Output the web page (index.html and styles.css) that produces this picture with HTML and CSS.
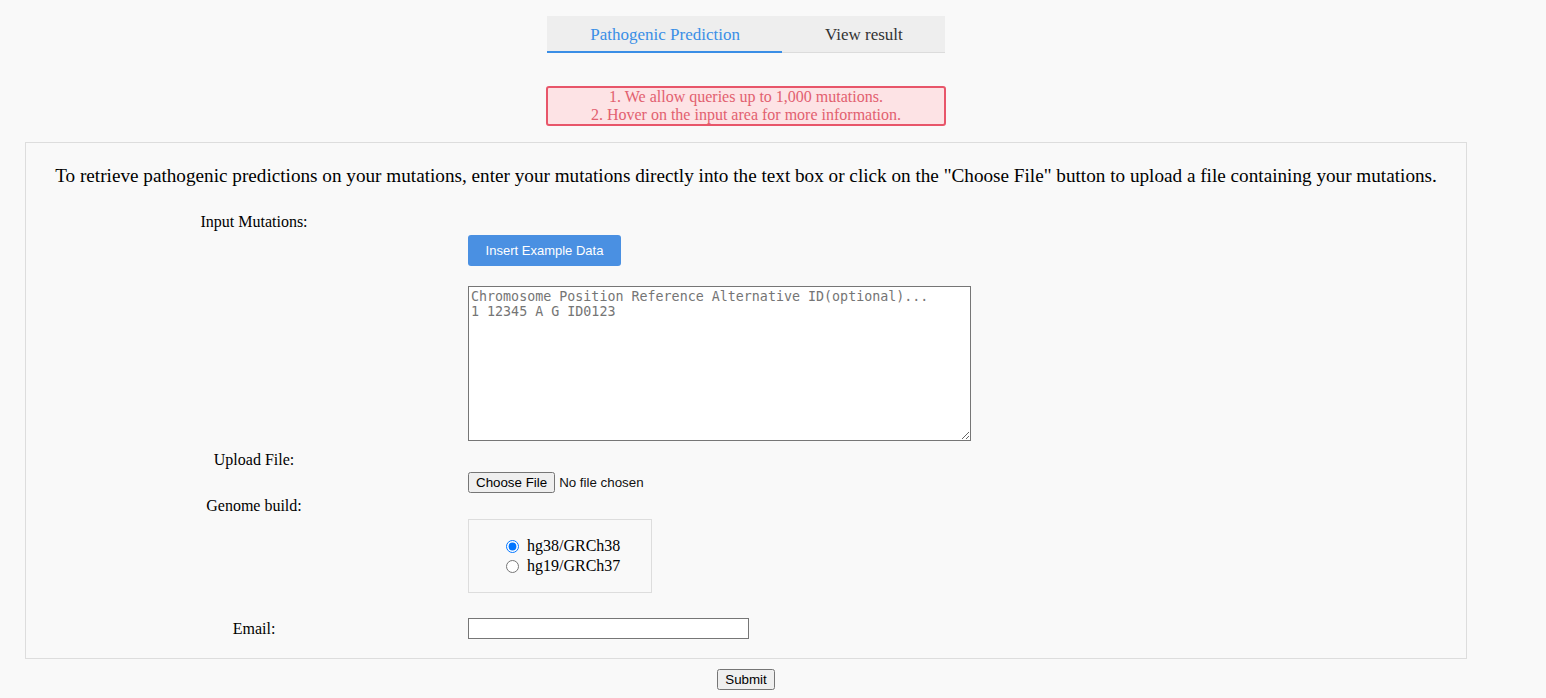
FILE: index.html
```html
<!DOCTYPE html>
<html lang="en">
<head>
  <meta charset="UTF-8">
  <meta name="viewport" content="width=device-width, initial-scale=1.0">
  <title>Pathogenic Prediction</title>
  <link rel="stylesheet" href="styles.css">
</head>
<body>
  <div class="page">
    <!-- tabs -->
    <div class="tabs">
      <a class="tab active" href="#">Pathogenic Prediction</a>
      <a class="tab" href="#">View result</a>
    </div>

    <div class="notice">
      1. We allow queries up to 1,000 mutations.<br>
      2. Hover on the input area for more information.
    </div>

    <form class="panel" onsubmit="return false;">
      <p class="intro">To retrieve pathogenic predictions on your mutations, enter your mutations directly into the text box or click on the "Choose File" button to upload a file containing your mutations.</p>

      <div class="field field-mutations">
        <label class="field-label" for="mutations">Input Mutations:</label>
        <div class="field-control">
          <button type="button" class="example-btn" id="insert-example">Insert Example Data</button>
          <textarea id="mutations" placeholder="Chromosome Position Reference Alternative ID(optional)...&#10;1 12345 A G ID0123"></textarea>
        </div>
      </div>

      <div class="field field-upload">
        <label class="field-label" for="file">Upload File:</label>
        <div class="field-control">
          <input type="file" id="file">
        </div>
      </div>

      <div class="field field-genome">
        <label class="field-label">Genome build:</label>
        <div class="field-control">
          <div class="radio-box">
            <label><input type="radio" name="build" value="hg38" checked> hg38/GRCh38</label>
            <label><input type="radio" name="build" value="hg19"> hg19/GRCh37</label>
          </div>
        </div>
      </div>

      <div class="field field-email">
        <label class="field-label" for="email">Email:</label>
        <div class="field-control">
          <input type="email" id="email" class="email-input">
        </div>
      </div>
    </form>

    <div class="submit-row">
      <button type="button" class="submit-btn">Submit</button>
    </div>
  </div>

  <script>
    // サンプルデータの挿入
    document.getElementById('insert-example').addEventListener('click', function() {
      document.getElementById('mutations').value = '1 12345 A G ID0123';
    });
  </script>
</body>
</html>
```

FILE: styles.css
```css
body {
  margin: 0;
  padding: 0;
  background: #f9f9f9;
  font-family: 'Liberation Serif', 'Times New Roman', serif;
  font-size: 16px;
  color: #111;
}
.page {
  width: 1442px;
  margin: 0 25px;
  padding-top: 16px;
}
/* tabs */
.tabs {
  display: flex;
  justify-content: center;
}
.tab {
  display: block;
  height: 36px;
  line-height: 37px;
  padding: 0 42px 0 43px;
  background: #eeeeee;
  color: #333;
  font-size: 17px;
  text-decoration: none;
  border-bottom: 1px solid #dcdcdc;
}
.tab.active {
  color: #3a8ee6;
  height: 35px;
  border-bottom: 2px solid #3a8ee6;
}
.notice {
  width: 396px;
  margin: 33px auto 0;
  border: 2px solid #e8566a;
  border-radius: 3px;
  background: #fde3e5;
  color: #e2606f;
  text-align: center;
  line-height: 18px;
}
.panel {
  margin: 16px 0 0;
  padding: 22px 14px 19px;
  border: 1px solid #dddddd;
  background: #f9f9f9;
}
.intro {
  margin: 0 0 26px;
  text-align: center;
  font-size: 19.2px;
  line-height: 22px;
  color: #000;
}
.field {
  display: grid;
  grid-template-columns: 428px 1fr;
  align-items: start;
}
.field-label {
  display: block;
  text-align: center;
  line-height: 18px;
  color: #000;
}
.field-control {
  padding-top: 22px;
  display: flex;
  flex-direction: column;
  align-items: flex-start;
}
.field-upload {
  margin-top: 10px;
}
.field-upload .field-control {
  padding-top: 21px;
}
.field-genome {
  margin-top: 4px;
}
.field-email {
  margin-top: 25px;
  align-items: center;
}
.field-email .field-control {
  padding-top: 0;
}
.example-btn {
  font-family: 'Liberation Sans', Arial, sans-serif;
  font-size: 13px;
  color: #fff;
  background: #4a90e2;
  border: none;
  border-radius: 3px;
  width: 153px;
  height: 31px;
  padding: 0;
  cursor: pointer;
}
textarea {
  margin-top: 20px;
  width: 503px;
  height: 155px;
  box-sizing: border-box;
  border: 1px solid #767676;
  padding: 2px;
  font-family: 'DejaVu Sans Mono', monospace;
  font-size: 13.33px;
  line-height: 15px;
  background: #fff;
}
textarea::placeholder {
  color: #757575;
}
input[type="file"] {
  font-family: 'Liberation Sans', Arial, sans-serif;
  font-size: 13.33px;
  margin: 0;
}
.radio-box {
  box-sizing: border-box;
  width: 184px;
  height: 74px;
  border: 1px solid #dddddd;
  padding: 16px 0 0 36px;
  display: flex;
  flex-direction: column;
}
.radio-box label {
  display: flex;
  align-items: center;
  line-height: 20px;
  font-size: 16px;
  color: #000;
}
.radio-box input {
  margin: 0 8px 0 1px;
  width: 13px;
  height: 13px;
}
.email-input {
  box-sizing: border-box;
  width: 281px;
  height: 21px;
  margin: 0;
  border: 1px solid #767676;
  background: #fff;
}
.submit-row {
  text-align: center;
  margin-top: 10px;
}
.submit-btn {
  font-family: 'Liberation Sans', Arial, sans-serif;
  font-size: 13.33px;
}
```
